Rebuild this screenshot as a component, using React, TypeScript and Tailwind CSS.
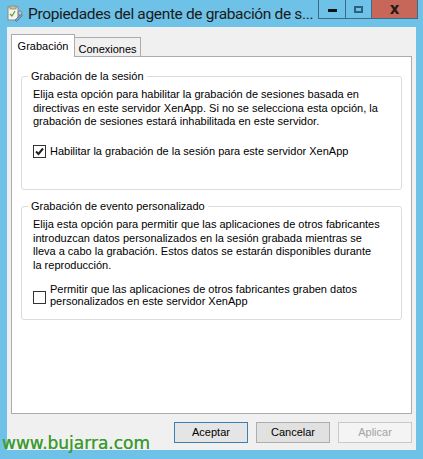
import React from "react";

const Check = () => (
  <svg width="9" height="9" viewBox="0 0 9 9">
    <path d="M1 4.5 L3.5 7 L8 1.5" fill="none" stroke="#222" strokeWidth="2" />
  </svg>
);

const AppIcon = () => (
  <svg width="17" height="17" viewBox="0 0 17 17">
    <rect x="2" y="2" width="10" height="13" fill="#f4f4ec" stroke="#8a8a7a" />
    <rect x="4" y="1" width="6" height="3" fill="#c8c0a0" stroke="#8a8a7a" strokeWidth="0.8" />
    <path d="M4 9 L6 11 L9 6" fill="none" stroke="#5aa04a" strokeWidth="1.3" />
    <path d="M9 15 L15 9 L16.5 10.5 L10.5 16.5 Z" fill="#7f9fc0" stroke="#4f6f8f" strokeWidth="0.7" />
    <circle cx="14" cy="8" r="2" fill="#c0c8d0" stroke="#60707f" strokeWidth="0.7" />
  </svg>
);

export default function App() {
  return (
    <div
      className="relative w-[423px] h-[459px] bg-[#6ec2e8] overflow-hidden flex flex-col"
      style={{ fontFamily: "'Liberation Sans', Arial, sans-serif" }}
    >
      {/* Title bar */}
      <div className="h-[27px] flex items-start shrink-0">
        <div className="pl-[6px] pt-[5px] w-[28px] shrink-0">
          <AppIcon />
        </div>
        <div
          className="flex-1 min-w-0 text-[15.5px] tracking-[-0.35px] leading-[28px] text-[#1a1a1a] whitespace-nowrap overflow-hidden"
          style={{ fontFamily: "Roboto, 'Noto Sans', sans-serif" }}
        >
          Propiedades del agente de grabación de s...
        </div>
        <div className="flex shrink-0 h-[19px] mr-[5px] border border-t-0 border-[#3b6b86]">
          <div className="w-[27px] h-full flex items-center justify-center border-r border-[#3b6b86]">
            <div className="w-[9px] h-[3px] bg-[#111] mt-[3px]" />
          </div>
          <div className="w-[26px] h-full flex items-center justify-center border-r border-[#3b6b86]">
            <div className="w-[9px] h-[7px] border-2 border-[#2d5f80]" />
          </div>
          <div className="w-[45px] h-full bg-[#c6675a] flex items-center justify-center">
            <span className="text-[15px] font-bold text-[#2a1a18] leading-none" style={{ fontFamily: "'DejaVu Sans', sans-serif" }}>
              x
            </span>
          </div>
        </div>
      </div>

      {/* Client area */}
      <div className="mx-[7px] h-[423px] bg-[#f0f0f0] flex flex-col shrink-0">
        <div className="pl-[4px] pr-[4px] pt-[7px] flex flex-col">
          {/* Tabs */}
          <div className="flex items-end h-[23px] relative z-10">
            <div className="w-[64px] h-[23px] bg-white border border-b-0 border-[#acacac] text-[11px] text-black flex items-start justify-center pt-[3px]">
              Grabación
            </div>
            <div className="w-[66px] h-[20px] bg-[#f0f0f0] border border-l-0 border-[#acacac] text-[11px] text-black flex items-start justify-center pt-[3px]">
              Conexiones
            </div>
          </div>
          {/* Panel */}
          <div className="h-[358px] bg-white border border-[#acacac] -mt-[1px] px-[9px] pt-[19px] flex flex-col gap-[16px]">
            {/* Group 1 */}
            <div className="relative h-[114px] border border-[#dcdcdc] rounded-[3px] pl-[11px] pt-[11px]">
              <div className="absolute -top-[7px] left-[6px] bg-white px-[3px] text-[11px] leading-[13px] text-black">
                Grabación de la sesión
              </div>
              <div className="text-[11px] leading-[13.5px] text-black">
                Elija esta opción para habilitar la grabación de sesiones basada en
                <br />
                directivas en este servidor XenApp. Si no se selecciona esta opción, la
                <br />
                grabación de sesiones estará inhabilitada en este servidor.
              </div>
              <div className="flex items-center gap-[4px] mt-[16px]">
                <div className="w-[13px] h-[13px] border border-[#333] bg-white flex items-center justify-center">
                  <Check />
                </div>
                <span className="text-[11px] leading-[13px] text-black">
                  Habilitar la grabación de la sesión para este servidor XenApp
                </span>
              </div>
            </div>
            {/* Group 2 */}
            <div className="relative h-[114px] border border-[#dcdcdc] rounded-[3px] pl-[11px] pt-[11px]">
              <div className="absolute -top-[7px] left-[6px] bg-white px-[3px] text-[11px] leading-[13px] text-black">
                Grabación de evento personalizado
              </div>
              <div className="text-[11px] leading-[13.5px] text-black">
                Elija esta opción para permitir que las aplicaciones de otros fabricantes
                <br />
                introduzcan datos personalizados en la sesión grabada mientras se
                <br />
                lleva a cabo la grabación. Estos datos se estarán disponibles durante
                <br />
                la reproducción.
              </div>
              <div className="flex items-center gap-[4px] mt-[11px]">
                <div className="w-[13px] h-[13px] border border-[#333] bg-white shrink-0 mt-[4px]" />
                <span className="text-[11px] leading-[12px] text-black">
                  Permitir que las aplicaciones de otros fabricantes graben datos
                  <br />
                  personalizados en este servidor XenApp
                </span>
              </div>
            </div>
          </div>
        </div>
        {/* Buttons */}
        <div className="flex justify-end gap-[8px] pr-[4px] pt-[8px]">
          <button className="w-[74px] h-[21px] bg-[#e5e5e5] border border-[#3c7fb1] text-[11px] text-black">
            Aceptar
          </button>
          <button className="w-[74px] h-[21px] bg-[#e1e1e1] border border-[#adadad] text-[11px] text-black">
            Cancelar
          </button>
          <button className="w-[74px] h-[21px] bg-[#f4f4f4] border border-[#c9c9c9] text-[11px] text-[#a3a3a3]">
            Aplicar
          </button>
        </div>
      </div>

      {/* Watermark */}
      <div
        className="absolute left-[2px] top-[433px] text-[17px] leading-[20px] text-[#3e9b32] [text-shadow:0_0_0.4px_#3e9b32]"
        style={{ fontFamily: "'DejaVu Sans', Verdana, sans-serif" }}
      >
        www.bujarra.com
      </div>
    </div>
  );
}
